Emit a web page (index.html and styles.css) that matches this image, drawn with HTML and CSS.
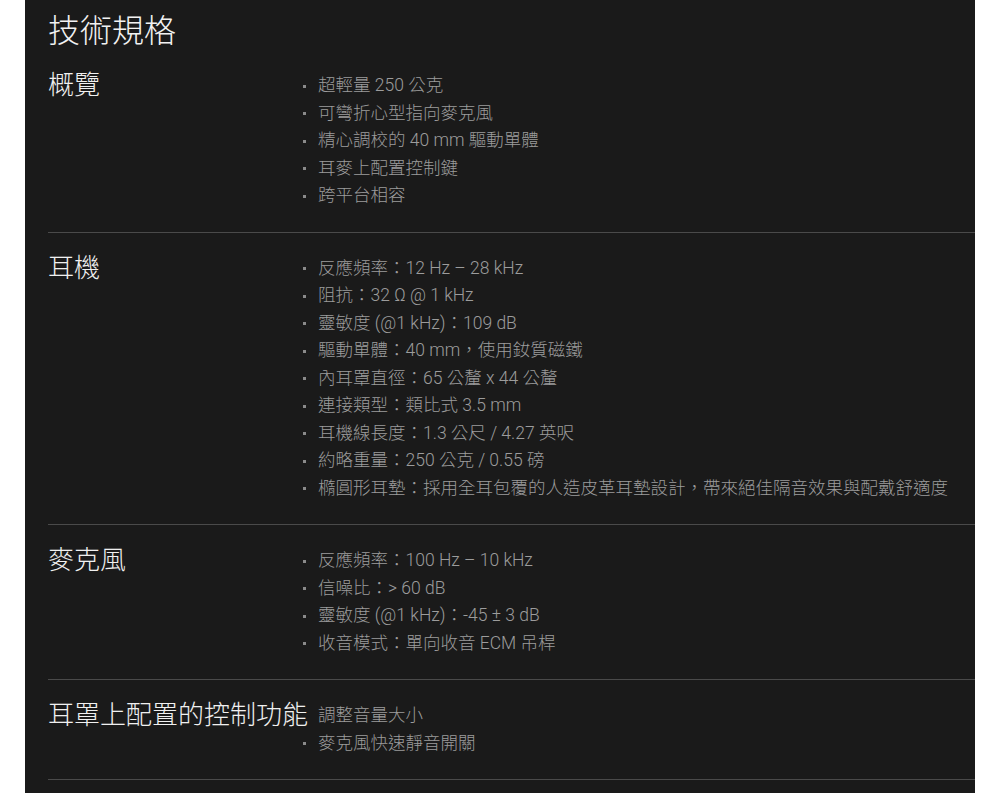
FILE: index.html
```html
<!DOCTYPE html>
<html lang="zh-Hant">
<head>
<meta charset="utf-8">
<title>技術規格</title>
<link rel="stylesheet" href="styles.css">
</head>
<body>
<main class="panel">
  <h1 class="title">技術規格</h1>
  <section class="spec">
    <h2 class="spec-head">概覽</h2>
    <ul class="spec-list">
      <li>超輕量 250 公克</li>
      <li>可彎折心型指向麥克風</li>
      <li>精心調校的 40 mm 驅動單體</li>
      <li>耳麥上配置控制鍵</li>
      <li>跨平台相容</li>
    </ul>
  </section>
  <section class="spec">
    <h2 class="spec-head">耳機</h2>
    <ul class="spec-list">
      <li>反應頻率：12 Hz – 28 kHz</li>
      <li>阻抗：32 Ω @ 1 kHz</li>
      <li>靈敏度 (@1 kHz)：109 dB</li>
      <li>驅動單體：40 mm，使用釹質磁鐵</li>
      <li>內耳罩直徑：65 公釐 x 44 公釐</li>
      <li>連接類型：類比式 3.5 mm</li>
      <li>耳機線長度：1.3 公尺 / 4.27 英呎</li>
      <li>約略重量：250 公克 / 0.55 磅</li>
      <li>橢圓形耳墊：採用全耳包覆的人造皮革耳墊設計，帶來絕佳隔音效果與配戴舒適度</li>
    </ul>
  </section>
  <section class="spec">
    <h2 class="spec-head">麥克風</h2>
    <ul class="spec-list">
      <li>反應頻率：100 Hz – 10 kHz</li>
      <li>信噪比：&gt; 60 dB</li>
      <li>靈敏度 (@1 kHz)：-45 ± 3 dB</li>
      <li>收音模式：單向收音 ECM 吊桿</li>
    </ul>
  </section>
  <section class="spec">
    <h2 class="spec-head">耳罩上配置的控制功能</h2>
    <ul class="spec-list">
      <li class="plain">調整音量大小</li>
      <li>麥克風快速靜音開關</li>
    </ul>
  </section>
</main>
</body>
</html>
```
FILE: styles.css
```css
html, body {
  margin: 0;
  padding: 0;
  background: #ffffff;
}
body {
  font-family: "Roboto", "Noto Sans CJK TC", sans-serif;
}
.panel {
  margin: 0 25px;
  background: #1a1a1a;
  padding: 11px 0 14px 23px;
  min-height: 793px;
  box-sizing: border-box;
}
.title {
  margin: 0;
  font-size: 32px;
  line-height: 40px;
  font-weight: 300;
  color: #f2f2f2;
}
.spec {
  display: flex;
  padding: 21px 0 22px;
  border-bottom: 1px solid #4a4a4a;
}
.spec + .spec {
  padding-top: 22px;
}
.spec-head {
  flex: 0 0 255px;
  min-width: 0;
  margin: 0;
  font-size: 26px;
  line-height: 27.5px;
  font-weight: 300;
  color: #f0f0f0;
  white-space: nowrap;
}
.spec-list {
  list-style: none;
  margin: 0;
  padding: 0;
  font-size: 17.5px;
  line-height: 27.5px;
  font-weight: 300;
  color: #9c9c9c;
}
.spec-list li::before {
  content: "";
  display: inline-block;
  width: 3px;
  height: 3px;
  background: #8a8a8a;
  margin-right: 12px;
  vertical-align: middle;
}
.spec-list li.plain::before {
  visibility: hidden;
}
```
